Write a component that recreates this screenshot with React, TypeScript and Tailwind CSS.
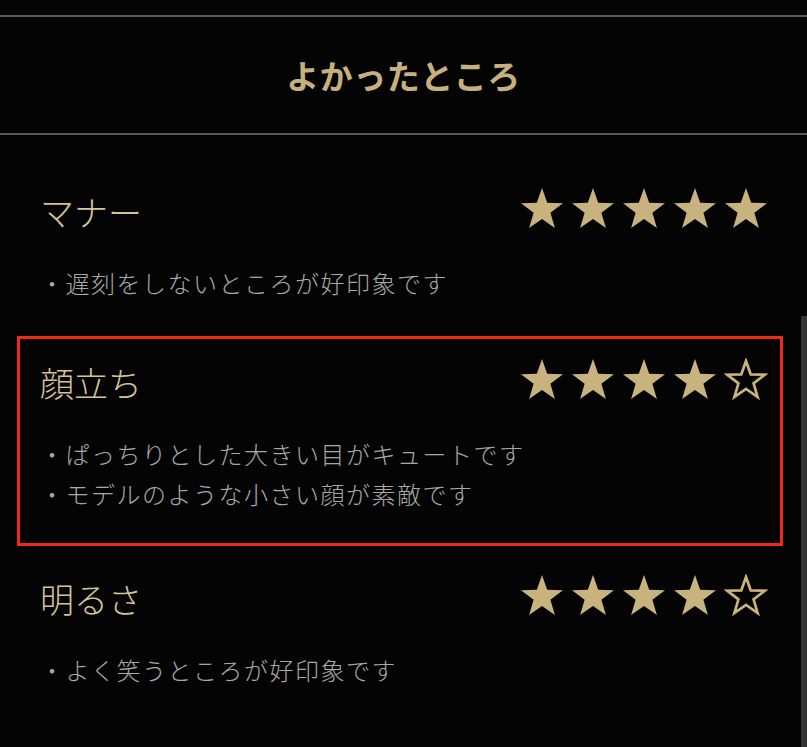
import React from "react";

const GOLD = "#c8b27e";

function Star({ filled }: { filled: boolean }) {
  return (
    <svg width="44" height="42" viewBox="0 0 44 42" className="block">
      <polygon
        points="22,1 27.2,15.8 43,16.2 30.4,25.8 34.9,41 22,32 9.1,41 13.6,25.8 1,16.2 16.8,15.8"
        fill={filled ? GOLD : "none"}
        stroke={GOLD}
        strokeWidth={filled ? 0 : 3}
        strokeLinejoin="miter"
        transform={filled ? undefined : "translate(22 21) scale(0.9) translate(-22 -21)"}
      />
    </svg>
  );
}

function Stars({ n }: { n: number }) {
  return (
    <div className="flex gap-[7px]">
      {[0, 1, 2, 3, 4].map((i) => (
        <Star key={i} filled={i < n} />
      ))}
    </div>
  );
}

type Item = { title: string; stars: number; notes: string[]; hl?: boolean; extra?: boolean };

const items: Item[] = [
  { title: "マナー", stars: 5, notes: ["遅刻をしないところが好印象です"] },
  {
    title: "顔立ち",
    stars: 4,
    notes: ["ぱっちりとした大きい目がキュートです", "モデルのような小さい顔が素敵です"],
    hl: true,
  },
  { title: "明るさ", stars: 4, notes: ["よく笑うところが好印象です"], extra: true },
];

export default function App() {
  return (
    <div
      className="relative w-[807px] h-[747px] overflow-hidden bg-[#040404]"
      style={{ fontFamily: '"Noto Sans CJK JP", "Noto Sans", sans-serif' }}
    >
      <div className="h-[15px]" />
      <div className="h-[2px] bg-[#5a5a5a]" />
      <div className="h-[116px] flex items-center justify-center">
        <span className="text-[33px] font-bold tracking-[0.5px] text-[#c6b17e] leading-none">
          よかったところ
        </span>
      </div>
      <div className="h-[2px] bg-[#5a5a5a]" />
      <div className="pl-[17px] pr-[24px] pt-[30px] flex flex-col gap-[1px]">
        {items.map((it) => (
          <div
            key={it.title}
            className={
              "border-[3px] pl-[20px] pr-[12px] pt-[19px] pb-[29px] " +
              (it.hl ? "border-[#ee2a10] " : "border-transparent ") +
              (it.extra ? "mt-[5px]" : "")
            }
          >
            <div className="flex items-center justify-between h-[50px]">
              <span className="text-[34px] leading-none text-[#d4c29a] font-light">
                {it.title}
              </span>
              <div className="-mt-[8px]">
                <Stars n={it.stars} />
              </div>
            </div>
            <div className="mt-[26px] flex flex-col">
              {it.notes.map((n) => (
                <div
                  key={n}
                  className="h-[40px] flex items-center text-[24px] tracking-[1.5px] text-[#a8a8a8] font-light"
                >
                  ・{n}
                </div>
              ))}
            </div>
          </div>
        ))}
      </div>
      <div className="absolute right-0 top-[316px] w-[6px] h-[431px] bg-[#333333]" />
    </div>
  );
}
